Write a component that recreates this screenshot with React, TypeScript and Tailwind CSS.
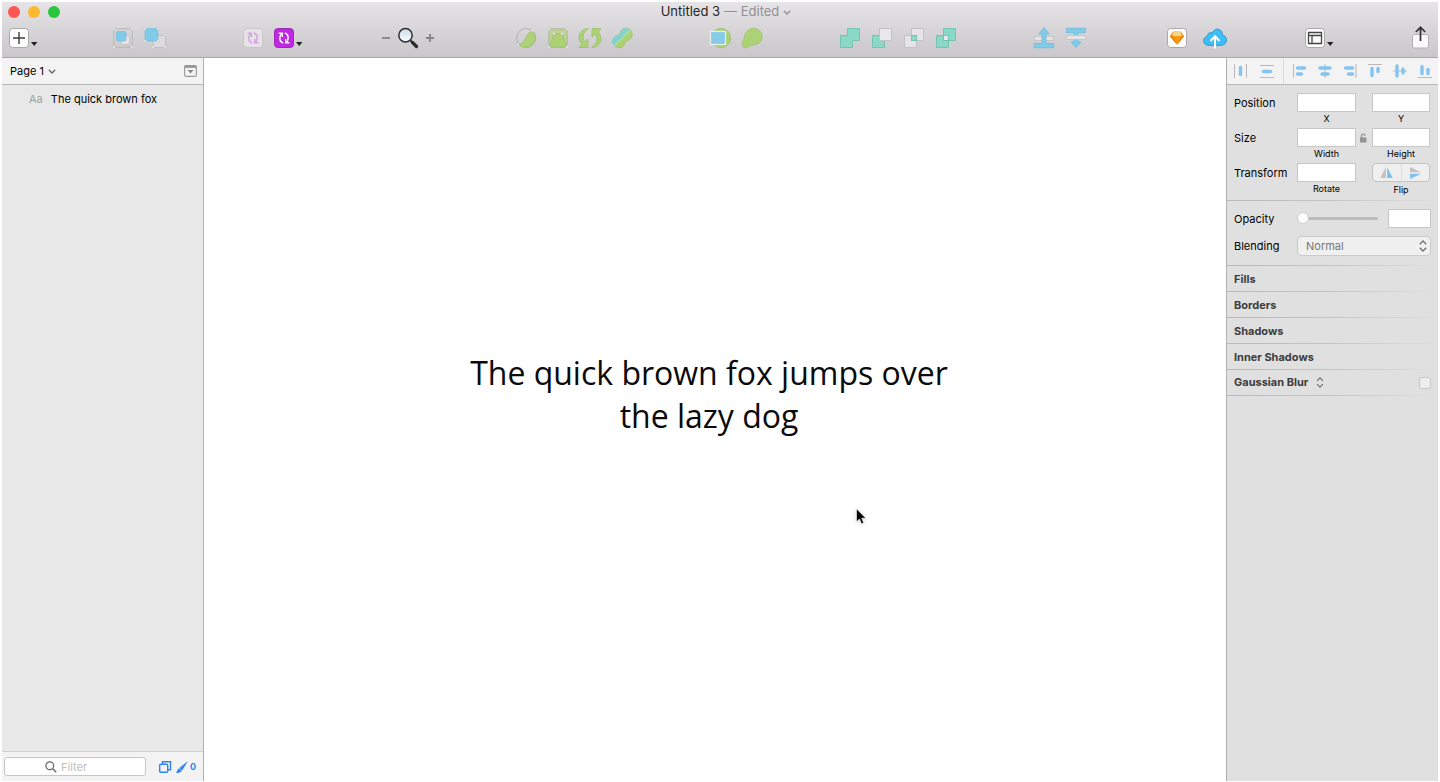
import React from "react";

type IconProps = { children: React.ReactNode; className?: string; box?: string };

function Icon({ children, className = "h-5 w-5", box = "0 0 20 20" }: IconProps) {
  return (
    <svg viewBox={box} className={`block shrink-0 overflow-visible ${className}`} fill="none" aria-hidden="true">
      {children}
    </svg>
  );
}

function Tool({ label, children, dim = false }: { label: string; children: React.ReactNode; dim?: boolean }) {
  return (
    <button type="button" aria-label={label} className={dim ? "block shrink-0 opacity-90" : "block shrink-0"}>
      {children}
    </button>
  );
}

function Group({ children, gap = "gap-3" }: { children: React.ReactNode; gap?: string }) {
  return <div className={`flex items-center ${gap}`}>{children}</div>;
}

function Caret() {
  return (
    <Icon className="mt-3 h-1 w-[7px]" box="0 0 7 4">
      <path d="M0 0h6.4L3.2 4z" fill="#222" />
    </Icon>
  );
}

function Tile({ faded = false }: { faded?: boolean }) {
  return (
    <rect x=".5" y=".5" width="19" height="19" rx="3.2" fill={faded ? "#e6e3e6" : "#fdfdfd"} stroke={faded ? "#c8c4c8" : "#aaa6aa"} />
  );
}

function Chevron({ color }: { color: string }) {
  return (
    <Icon className="h-[5px] w-2" box="0 0 8 5">
      <path d="M.8.8 4 4 7.2.8" stroke={color} strokeWidth="1.3" />
    </Icon>
  );
}

function Handles({ points }: { points: number[][] }) {
  return (
    <>
      {points.map(([x, y]) => (
        <circle key={`${x}-${y}`} cx={x} cy={y} r="1.3" fill="#f4f3f4" stroke="#bab7ba" strokeWidth=".5" />
      ))}
    </>
  );
}

function Sync({ color }: { color: string }) {
  return (
    <g stroke={color} strokeWidth="1.400">
      <path d="M9.200 15C6.500 14 5.600 12 5.900 9.500 6 8 6.600 6.600 7.800 5.400" />
      <path d="M4.600 5.300h3.700v3.700" />
      <path d="M10.800 5c2.700 1 3.600 3 3.300 5.500-.1 1.500-.7 2.900-1.900 4.100" />
      <path d="M15.400 14.700h-3.700V11" />
    </g>
  );
}

const GREEN = "#a9d36b";
const GREEN_EDGE = "#8fb95c";
const TEAL = "#8ad9c6";
const TEAL_EDGE = "#73c4b0";
const BLUE = "#7fcbe9";

function Toolbar() {
  return (
    <div className="flex h-8 items-center justify-between pr-[9px] pl-[7px]">
      <div className="flex w-[26px] items-center gap-[2px]">
        <Tool label="Insert">
          <Icon>
            <Tile />
            <path d="M10 4v12M4 10h12" stroke="#3c3c3c" strokeWidth="1.400" />
          </Icon>
        </Tool>
        <Caret />
      </div>

      <Group>
        <Tool label="Group">
          <Icon>
            <rect x=".8" y=".8" width="18.400" height="18.400" stroke="#b5b2b5" strokeWidth=".9" />
            <rect x="8" y="8" width="8.500" height="8.500" rx="1.500" fill="#e6e4e6" stroke="#c4c1c4" />
            <rect x="3.500" y="3.500" width="9.500" height="9.500" rx="1.200" fill={BLUE} stroke="#70b8d8" strokeWidth=".6" />
            <Handles points={[[1, 1], [19, 1], [1, 19], [19, 19]]} />
          </Icon>
        </Tool>
        <Tool label="Ungroup">
          <Icon>
            <rect x="8" y="7.500" width="12.500" height="12" fill="#dedcde" stroke="#bbb8bb" strokeWidth=".8" />
            <rect x="0" y=".5" width="13" height="12.500" rx="1" fill={BLUE} stroke="#70b8d8" strokeWidth=".6" />
            <Handles points={[[0, 1], [13, 1], [0, 13], [13, 13], [20, 7], [20, 19], [8, 19]]} />
          </Icon>
        </Tool>
      </Group>

      <Group gap="gap-[2px]">
        <div className="flex items-center gap-[11px]">
          <Tool label="Create Symbol">
            <Icon>
              <Tile faded />
              <Sync color="#d6a0e4" />
            </Icon>
          </Tool>
          <Tool label="Symbols">
            <Icon>
              <rect x=".5" y=".5" width="19" height="19" rx="3.200" fill="#c026e3" stroke="#9d2bb8" />
              <Sync color="#fff" />
            </Icon>
          </Tool>
        </div>
        <Caret />
      </Group>

      <div className="flex items-center gap-[7px] pr-1">
        <Tool label="Zoom out">
          <Icon className="h-2 w-2" box="0 0 8 8">
            <path d="M0 4h8" stroke="#858285" strokeWidth="1.800" />
          </Icon>
        </Tool>
        <Tool label="Zoom">
          <Icon className="h-[22px] w-[22px]" box="0 0 22 22">
            <path d="m13.500 13.500 2.500 2.500" stroke="#2a2a2a" strokeWidth="1.800" />
            <path d="m15.500 15.500 4 4" stroke="#2a2a2a" strokeWidth="3.200" strokeLinecap="round" />
            <circle cx="8.500" cy="8.300" r="6.700" fill="url(#glass)" stroke="#2e2e2e" strokeWidth="1.500" />
          </Icon>
        </Tool>
        <Tool label="Zoom in">
          <Icon className="h-2 w-2" box="0 0 8 8">
            <path d="M0 4h8M4 0v8" stroke="#858285" strokeWidth="1.800" />
          </Icon>
        </Tool>
      </div>

      <Group>
        <Tool label="Edit" dim>
          <Icon>
            <circle cx="10.300" cy="10" r="9.500" stroke="#aaa8aa" strokeWidth=".9" />
            <path d="M2.500 16.500C6 15.500 8 13.500 9.500 10.500 11 7 13 3.500 16.500 2.800A9.700 9.700 0 1 1 2.500 16.500Z" fill={GREEN} stroke={GREEN_EDGE} strokeWidth=".6" />
            <Handles points={[[2, 16.500], [16.500, 2.500]]} />
          </Icon>
        </Tool>
        <Tool label="Transform" dim>
          <Icon>
            <rect x=".8" y=".8" width="18.400" height="18.400" fill="#b9d389" stroke="#aaae9e" strokeWidth=".8" />
            <path d="M1.500 19 6 5.500h8L18.500 19z" fill={GREEN} stroke="#92b85c" strokeWidth=".6" />
            <path d="M2.500 3.200h15" stroke="#dfcf8f" strokeWidth="1" strokeDasharray="1 1" />
            <path d="M6 9h8" stroke="#cfcf5f" strokeWidth="1" strokeDasharray="1 1" />
            <Handles points={[[1, 1], [19, 1], [1, 19], [19, 19], [6, 5.500], [14, 5.500]]} />
          </Icon>
        </Tool>
        <Tool label="Rotate" dim>
          <Icon>
            <path d="M8.500.5C.5.5-4.500 9.500 1.800 16L-1 19.500H8V11L5 13.800C1.500 10 2.800 4.500 8.500.5Z" fill={GREEN} stroke={GREEN_EDGE} strokeWidth=".7" />
            <path d="M11.500 19.500c8 0 13-9 6.700-15.500L21 .5h-9V9l3-2.800c3.500 3.800 2.200 9.300-3.500 13.300Z" fill={GREEN} stroke={GREEN_EDGE} strokeWidth=".7" />
          </Icon>
        </Tool>
        <Tool label="Flatten" dim>
          <Icon>
            <path d="M6.300 7.200C7.500 6.500 7.600 5.800 8 4.500a6.300 6.300 0 1 1 8 8c-1.500.5-2 .9-2.700 2.200A6.300 6.300 0 1 1 6.300 7.200Z" fill={GREEN} stroke={GREEN_EDGE} strokeWidth=".6" />
            <path d="M1.800 18A6.300 6.300 0 0 1 6.300 7.200C7.500 6.500 7.600 5.800 8 4.500a6.300 6.300 0 0 1 10.300-2.600Z" fill="#7ed2cd" />
            <path d="M1.800 18 18.300 1.900" stroke="#d4e5bd" strokeWidth=".8" />
          </Icon>
        </Tool>
      </Group>

      <Group>
        <Tool label="Mask" dim>
          <Icon>
            <circle cx="11" cy="10" r="9.700" fill={GREEN} stroke="#97b96a" strokeWidth=".7" />
            <rect x=".5" y="3.500" width="15" height="13" fill={BLUE} stroke="#eef2ef" strokeWidth="1.200" />
          </Icon>
        </Tool>
        <Tool label="Scale" dim>
          <Icon>
            <path d="M1 18.500C-.8 16.500.2 14.500 1.300 12.800 2 11.500 2 9.500 2.600 7.600 4 3 7.500.3 11.800.3c4.700 0 8.400 3.600 8.400 8.200 0 4.500-3.300 7.800-7.700 8.400-2 .3-3.300.2-4.700 1.100C5.500 19.800 3 20.600 1 18.500Z" fill={GREEN} stroke="#97b96a" strokeWidth=".7" />
          </Icon>
        </Tool>
      </Group>

      <Group>
        <Tool label="Union">
          <Icon>
            <path d="M7.500.5h12v12h-7v7H.5v-12h7z" fill={TEAL} stroke={TEAL_EDGE} />
          </Icon>
        </Tool>
        <Tool label="Subtract">
          <Icon>
            <path d="M.5 7.500h12v12H.5z" fill={TEAL} stroke={TEAL_EDGE} />
            <path d="M7.500.5h12v12h-12z" fill="#e9e7e9" stroke="#c4c1c4" />
          </Icon>
        </Tool>
        <Tool label="Intersect">
          <Icon>
            <path d="M7.500.5h12v12h-12zM.5 7.500h12v12H.5z" fill="#e6e4e6" stroke="#c4c1c4" />
            <rect x="7.500" y="7.500" width="5" height="5" fill={TEAL} stroke={TEAL_EDGE} />
          </Icon>
        </Tool>
        <Tool label="Difference">
          <Icon>
            <path d="M7.500.5h12v12h-7v7H.5v-12h7z" fill={TEAL} stroke={TEAL_EDGE} />
            <rect x="7.500" y="7.500" width="5" height="5" fill="#e9e7e9" stroke={TEAL_EDGE} />
          </Icon>
        </Tool>
      </Group>

      <div className="flex items-center gap-3 pr-[2px]">
        <Tool label="Forward">
          <Icon>
            <rect x=".8" y="8.500" width="18.400" height="4" fill="#e5e4e5" stroke="#c0bec0" strokeWidth=".7" />
            <path d="M.3 15.500H8V6H4.800L10-.7 15.200 6H12v9.500h7.700v4.300H.3z" fill={BLUE} stroke="#6fb8d8" strokeWidth=".7" />
          </Icon>
        </Tool>
        <Tool label="Backward">
          <Icon>
            <path d="M.3.300h19.400v4.400H12V14h3l-5 5.500L5 14h3V4.700H.3z" fill={BLUE} stroke="#6fb8d8" strokeWidth=".7" />
            <rect x=".5" y="7.500" width="19" height="4" fill="#e5e4e5" stroke="#c0bec0" strokeWidth=".7" />
          </Icon>
        </Tool>
      </div>

      <Group gap="gap-4">
        <Tool label="Preview">
          <Icon>
            <Tile />
            <path d="M6 3.800 10 3l4 .8L17.200 8 10 16.800 2.800 8z" fill="#f89a12" />
            <path d="M6 3.800 10 3l4 .8L14.500 8h-9z" fill="#f5d489" />
            <path d="M2.800 8 6 3.800 5.500 8zM17.200 8 14 3.800l.5 4.200z" fill="#edae43" />
            <path d="M2.800 8h2.700l4.500 8.800zM17.200 8h-2.700L10 16.800z" fill="#e47b08" />
          </Icon>
        </Tool>
        <Tool label="Upload">
          <Icon className="h-5 w-6" box="0 0 24 20">
            <path
              d="M6 17.400C2.500 17.400.5 15.300.5 12.700c0-2.500 1.900-4.100 3.900-4.300C4 5.500 7 3.700 9.300 5 10.500 2 13 .7 15.400 1.200c3 .6 4.400 3.200 4 5.900 2.600.4 4.200 2.400 4.100 4.900-.1 3.100-2.200 5.400-5.500 5.400z"
              fill="#3dbef9"
              stroke="#2b91c7"
              strokeWidth=".8"
            />
            <path d="M12 20.500V9M7.500 13 12 8.300l4.500 4.700" stroke="#fff" strokeWidth="2" />
          </Icon>
        </Tool>
      </Group>

      <Group gap="gap-[2px]">
        <Tool label="View">
          <Icon>
            <Tile />
            <path d="M3.500 4.500h13v11h-13zM3.500 7.500h13M7 7.500v8" stroke="#444" strokeWidth="1.300" />
          </Icon>
        </Tool>
        <Caret />
      </Group>

      <Tool label="Share">
        <Icon className="h-[22px] w-[17px]" box="0 0 17 22">
          <rect x=".5" y="7.500" width="16" height="13.500" rx="2" fill="#fafafa" stroke="#b2afb2" />
          <path d="M8.500 14V.5M3.800 5l4.700-4.700L13.200 5" stroke="#333" strokeWidth="1.700" />
        </Icon>
      </Tool>
    </div>
  );
}

function AlignBar() {
  const bars = "#86c4f0";
  const line = "#b9b9b9";
  const items: { label: string; art: React.ReactNode }[] = [
    { label: "Left", art: <><path d="M.5 0v14" stroke={line} /><path d="M4.500 4h7M4.500 10h4" stroke={bars} strokeWidth="3.400" strokeLinecap="round" /></> },
    { label: "Center", art: <><path d="M7 0v14" stroke={line} /><path d="M2 4h10M4 10h6" stroke={bars} strokeWidth="3.400" strokeLinecap="round" /></> },
    { label: "Right", art: <><path d="M13 0v14" stroke={line} /><path d="M2.500 4h7M5.500 10h4" stroke={bars} strokeWidth="3.400" strokeLinecap="round" /></> },
    { label: "Top", art: <><path d="M0 .5h14" stroke={line} /><path d="M4 4.500v7M10 4.500v3" stroke={bars} strokeWidth="3.400" strokeLinecap="round" /></> },
    { label: "Middle", art: <><path d="M0 7h14" stroke={line} /><path d="M4 2v10M10 5v4" stroke={bars} strokeWidth="3.400" strokeLinecap="round" /></> },
    { label: "Bottom", art: <><path d="M0 13.500h14" stroke={line} /><path d="M4 2.500v7M10 5.500v4" stroke={bars} strokeWidth="3.400" strokeLinecap="round" /></> },
  ];
  return (
    <div className="flex h-[27px] items-center border-b border-[#b8b8b8] bg-[#f3f3f3] pr-[6px] pl-[7px]">
      <div className="flex gap-3">
        <button type="button" aria-label="Distribute horizontally">
          <Icon className="h-[14px] w-[14px]" box="0 0 14 14">
            <path d="M.5 0v14M12.500 0v14" stroke={line} />
            <path d="M6.500 3.500v7" stroke={bars} strokeWidth="3.400" strokeLinecap="round" />
          </Icon>
        </button>
        <button type="button" aria-label="Distribute vertically">
          <Icon className="h-[14px] w-[14px]" box="0 0 14 14">
            <path d="M0 1.500h14M0 13.500h14" stroke={line} />
            <path d="M3.500 7.500h7" stroke={bars} strokeWidth="3.400" strokeLinecap="round" />
          </Icon>
        </button>
      </div>
      <div className="ml-[9px] h-full w-px bg-[#dcdcdc]" />
      <div className="flex flex-1 justify-between pl-[9px]">
        {items.map((item) => (
          <button key={item.label} type="button" aria-label={`Align ${item.label}`}>
            <Icon className="h-[14px] w-[14px]" box="0 0 14 14">{item.art}</Icon>
          </button>
        ))}
      </div>
    </div>
  );
}

function Field({ label }: { label: string }) {
  return (
    <label className="flex h-[35px] flex-col text-center text-[9px] leading-[14px] text-black">
      <input aria-label={label} className="h-[19px] w-full border border-[#c6c6c6] bg-white px-1 text-[11px] outline-none" />
      <span>{label}</span>
    </label>
  );
}

function Rule() {
  return <div className="h-px bg-linear-to-r from-[#b9b9b9] via-[#c4c4c4] to-[#e0e0e0]" />;
}

function UpDown({ className }: { className: string }) {
  return (
    <Icon className={className} box="0 0 8 12">
      <path d="M.8 4.200 4 1l3.200 3.200M.8 7.800 4 11l3.200-3.200" stroke="#6f6f6f" strokeWidth="1.300" />
    </Icon>
  );
}

function Inspector() {
  return (
    <aside className="flex w-[212px] shrink-0 flex-col border-l border-[#b0b0b0] bg-[#e0e0e0] text-[11px] text-black">
      <AlignBar />
      <div className="grid grid-cols-[63px_59px_16px_58px] px-[7px] pt-2 pb-[2px]">
        <span className="leading-5">Position</span>
        <Field label="X" />
        <span />
        <Field label="Y" />
        <span className="leading-5">Size</span>
        <Field label="Width" />
        <button type="button" aria-label="Lock proportions" className="flex h-[19px] items-center justify-center">
          <Icon className="h-[10px] w-2" box="0 0 8 10">
            <rect y="4.500" width="6.500" height="5" fill="#929292" />
            <path d="M1.500 5V3c0-2.600 3.700-2.600 3.700 0" stroke="#929292" strokeWidth="1.200" />
          </Icon>
        </button>
        <Field label="Height" />
        <span className="leading-5">Transform</span>
        <Field label="Rotate" />
        <span />
        <div className="flex flex-col text-center text-[9px] leading-4">
          <div className="flex h-[19px] rounded-[4px] border border-[#c3c3c3] bg-[#efefef]">
            <button type="button" aria-label="Flip horizontally" className="flex flex-1 items-center justify-center border-r border-[#dedede]">
              <Icon className="h-3 w-[13px]" box="0 0 13 12">
                <path d="M5.800 0v11H.3z" fill="#c2c2c2" />
                <path d="M7.200 0v11h5.500z" fill="#7fc0ee" />
              </Icon>
            </button>
            <button type="button" aria-label="Flip vertically" className="flex flex-1 items-center justify-center">
              <Icon className="h-3 w-3" box="0 0 12 12">
                <path d="M1 0v5.300h11z" fill="#c2c2c2" />
                <path d="M1 12V6.700h11z" fill="#7fc0ee" />
              </Icon>
            </button>
          </div>
          <span>Flip</span>
        </div>
      </div>
      <Rule />
      <div className="flex flex-col gap-2 px-[7px] pt-2 pb-[9px]">
        <div className="flex h-[19px] items-center">
          <label htmlFor="opacity" className="w-[63px] leading-5">Opacity</label>
          <input
            id="opacity"
            type="range"
            defaultValue={0}
            className="h-3 w-[81px] appearance-none bg-transparent [&::-webkit-slider-runnable-track]:h-[3px] [&::-webkit-slider-runnable-track]:rounded-full [&::-webkit-slider-runnable-track]:bg-[#bcbcbc] [&::-webkit-slider-thumb]:-mt-[5px] [&::-webkit-slider-thumb]:h-3 [&::-webkit-slider-thumb]:w-3 [&::-webkit-slider-thumb]:appearance-none [&::-webkit-slider-thumb]:rounded-full [&::-webkit-slider-thumb]:border [&::-webkit-slider-thumb]:border-[#cfcfcf] [&::-webkit-slider-thumb]:bg-[#fcfcfc]"
          />
          <input aria-label="Opacity value" className="ml-auto h-[19px] w-[43px] border border-[#c6c6c6] bg-white px-1 outline-none" />
        </div>
        <div className="flex h-5 items-center">
          <label htmlFor="blending" className="w-[63px]">Blending</label>
          <div className="relative flex-1">
            <select id="blending" className="block h-5 w-full appearance-none rounded-[4px] border border-[#cacaca] bg-[#f0f0f0] pl-2 text-[11px] text-[#777] outline-none">
              <option>Normal</option>
            </select>
            <div className="pointer-events-none absolute inset-y-0 right-1 flex items-center">
              <UpDown className="h-3 w-2" />
            </div>
          </div>
        </div>
      </div>
      <Rule />
      {["Fills", "Borders", "Shadows", "Inner Shadows"].map((name) => (
        <div key={name}>
          <h2 className="h-[25px] px-[7px] font-bold leading-[27px] text-[#3c3c3c]">{name}</h2>
          <Rule />
        </div>
      ))}
      <div className="flex h-[25px] items-center gap-2 pr-[7px] pl-[7px]">
        <label htmlFor="blur" className="font-bold text-[#3c3c3c]">Gaussian Blur</label>
        <button type="button" aria-label="Blur type">
          <UpDown className="h-[11px] w-2" />
        </button>
        <input id="blur" type="checkbox" className="ml-auto h-3 w-3 appearance-none rounded-[3px] border border-[#c6c6c6] bg-[#eeeeee]" />
      </div>
      <Rule />
    </aside>
  );
}

function Sidebar() {
  return (
    <aside className="flex w-[202px] shrink-0 flex-col border-r border-[#b0b0b0] bg-[#e8e8e8] text-[11px] text-black">
      <div className="flex h-[27px] items-center justify-between border-b border-[#b8b8b8] bg-[#f3f3f3] pr-[6px] pl-2">
        <button type="button" className="flex items-center gap-1">
          <span>Page 1</span>
          <Chevron color="#666" />
        </button>
        <button type="button" aria-label="Toggle page list">
          <Icon className="h-3 w-[13px]" box="0 0 13 12">
            <rect x=".6" y=".6" width="11.800" height="10.800" rx="1.500" stroke="#999" strokeWidth="1.100" />
            <path d="M.6 1.700h11.800" stroke="#999" strokeWidth="2.400" />
            <path d="M3.500 5h6l-3 3.600z" fill="#888" />
          </Icon>
        </button>
      </div>
      <ul className="flex-1">
        <li className="flex h-7 items-center gap-2 pl-[27px]">
          <span className="text-[#a0a0a0]">Aa</span>
          <span>The quick brown fox</span>
        </li>
      </ul>
      <div className="flex h-[30px] items-center border-t border-[#d0d0d0] bg-[#f3f3f3] pr-[7px] pl-[2px]">
        <label className="flex h-[19px] w-[142px] items-center gap-1 rounded-[3px] border border-[#c6c6c6] bg-white pl-[40px]">
          <Icon className="h-3 w-3" box="0 0 12 12">
            <circle cx="4.800" cy="4.800" r="3.900" stroke="#666" strokeWidth="1.200" />
            <path d="m7.800 7.800 3.400 3.400" stroke="#666" strokeWidth="1.400" />
          </Icon>
          <input aria-label="Filter layers" placeholder="Filter" className="w-full min-w-0 bg-transparent leading-5 outline-none placeholder:text-[#bdbdbd]" />
        </label>
        <div className="ml-auto flex items-center gap-1 text-[#2f83f2]">
          <button type="button" aria-label="Show slices">
            <Icon className="h-3 w-[13px]" box="0 0 13 12">
              <rect x=".7" y="3.200" width="8" height="8" rx="1" stroke="currentColor" strokeWidth="1.400" />
              <path d="M3.500 3V.7h8v8H9" stroke="currentColor" strokeWidth="1.400" />
            </Icon>
          </button>
          <button type="button" aria-label="Exportable layers" className="flex items-center gap-[2px]">
            <Icon className="h-3 w-3" box="0 0 12 12">
              <path d="M12 0 6 9.800 3.300 7z" fill="currentColor" />
              <path d="M3 7.300 5.700 10.200C4.500 11.400 2.600 12 0 12c1-1 1.400-4 3-4.700z" fill="currentColor" />
            </Icon>
            <span className="text-[9px] font-bold">0</span>
          </button>
        </div>
      </div>
    </aside>
  );
}

export default function App() {
  return (
    <div className="flex min-h-screen flex-col bg-white px-[2px] pt-[2px] pb-px font-['Inter','Liberation_Sans',sans-serif]">
      <svg className="absolute h-0 w-0" aria-hidden="true">
        <defs>
          <linearGradient id="glass" x1="0" y1="0" x2="0" y2="1">
            <stop offset="0" stopColor="#c9dbe6" />
            <stop offset="1" stopColor="#fbfdfe" />
          </linearGradient>
        </defs>
      </svg>
      <header className="border-b border-[#aba8ab] bg-linear-to-b from-[#e7e4e7] to-[#cac7ca] pb-[3px]">
        <div className="grid h-5 grid-cols-[1fr_auto_1fr] items-center">
          <div className="flex gap-2 pl-[6px]">
            <button type="button" aria-label="Close" className="h-3 w-3 rounded-full bg-[#fc5753]" />
            <button type="button" aria-label="Minimize" className="h-3 w-3 rounded-full bg-[#fdb92e]" />
            <button type="button" aria-label="Full screen" className="h-3 w-3 rounded-full bg-[#27c73f]" />
          </div>
          <h1 className="flex items-center gap-1 pl-3 text-[13px] text-[#262626]">
            <span>Untitled 3</span>
            <span className="text-[#939093]">— Edited</span>
            <Chevron color="#939093" />
          </h1>
        </div>
        <Toolbar />
      </header>
      <div className="flex flex-1">
        <Sidebar />
        <main className="relative flex flex-1 items-center justify-center bg-white pr-3 pb-[52px]">
          <p className="max-w-[500px] text-center font-['Open_Sans',sans-serif] text-[32px] leading-[43px] text-[#0a0a0a]">
            The quick brown fox jumps over the lazy dog
          </p>
          <div className="absolute top-[450px] left-[652px]">
            <Icon className="h-[17px] w-[11px] drop-shadow-sm" box="0 0 11 17">
              <path d="M.5.800v13l3-2.800 2 4.800 2.200-.9-2-4.700h4.100z" fill="#000" stroke="#fff" strokeWidth=".6" />
            </Icon>
          </div>
        </main>
        <Inspector />
      </div>
    </div>
  );
}
